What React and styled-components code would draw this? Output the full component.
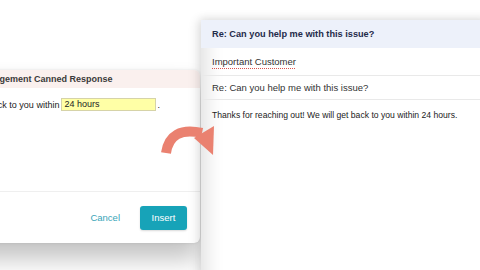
import styled, { createGlobalStyle } from "styled-components";

const GlobalStyle = createGlobalStyle`
  html, body {
    margin: 0;
    padding: 0;
    background: #fff;
  }
  body {
    font-family: "Liberation Sans", Arial, sans-serif;
  }
`;

const Stage = styled.div`
  position: relative;
  width: 480px;
  height: 270px;
  overflow: hidden;
  background: #fff;
  display: flex;
  align-items: flex-start;
`;

const Dialog = styled.div`
  flex: 0 0 300px;
  height: 173px;
  margin: 70px 0 0 -100px;
  background: #fff;
  border-radius: 6px;
  box-shadow: 0 16px 24px rgba(0, 0, 0, 0.24), 0 0 3px rgba(0, 0, 0, 0.1);
  display: flex;
  flex-direction: column;
  overflow: hidden;
`;

const DialogHeader = styled.div`
  height: 18px;
  display: flex;
  align-items: center;
  padding-left: ${(p) => p.indent}px;
  background: #faf0ee;
  font-size: 9px;
  font-weight: 700;
  color: #3a3a3a;
  white-space: nowrap;
`;

const DialogBody = styled.div`
  flex: 1;
  padding: 12px 0 0 ${(p) => p.indent}px;
  font-size: 9px;
  color: #222;
  white-space: nowrap;
  display: flex;
  align-items: flex-start;
`;

const Field = styled.span`
  display: inline-block;
  width: 89px;
  height: 11px;
  margin: -2px 1px 0 2px;
  padding: 0 2px;
  line-height: 11px;
  background: #ffffa6;
  border: 1px solid #d6d3a8;
  color: #222;
`;

const DialogFooter = styled.div`
  height: 52px;
  border-top: 1px solid #efefef;
  display: flex;
  align-items: center;
  justify-content: flex-end;
  gap: 20px;
  padding-right: 13px;
  box-sizing: border-box;
`;

const TextButton = styled.span`
  font-size: 9.5px;
  color: #3aa5b8;
`;

const PrimaryButton = styled.span`
  width: 47px;
  height: 24px;
  display: flex;
  align-items: center;
  justify-content: center;
  background: #17a3b8;
  color: #fff;
  font-size: 9.5px;
  border-radius: 3px;
  box-shadow: 0 1px 2px rgba(0, 0, 0, 0.15);
`;

const Panel = styled.div`
  flex: 0 0 290px;
  height: 260px;
  margin: 20px 0 0 1px;
  background: #fff;
  box-shadow: -3px 0 10px rgba(0, 0, 0, 0.12), 0 -2px 8px rgba(0, 0, 0, 0.05),
    inset 22px 0 18px -16px rgba(0, 0, 0, 0.12);
  display: flex;
  flex-direction: column;
`;

const PanelHeader = styled.div`
  height: 28px;
  display: flex;
  align-items: center;
  padding-left: 11px;
  background: #edf1fa;
  color: #1f2b4a;
  font-size: 9.2px;
  font-weight: 700;
`;

const PanelRow = styled.div`
  height: ${(p) => p.h}px;
  display: flex;
  align-items: center;
  padding-left: 11px;
  border-bottom: 1px solid #e9e9e9;
  color: #333;
  font-size: 9.5px;
`;

const Flagged = styled.span`
  text-decoration: underline dotted #d9534f;
  text-underline-offset: 3px;
`;

const PanelBody = styled.div`
  padding: 10px 0 0 11px;
  font-size: 8.6px;
  color: #222;
`;

const Arrow = styled.svg`
  position: absolute;
  left: 155px;
  top: 118px;
`;

export default function App() {
  return (
    <>
      <GlobalStyle />
      <Stage>
        <Dialog>
          <DialogHeader indent={52}>
            <span>Acknowledgement Canned Response</span>
          </DialogHeader>
          <DialogBody indent={42}>
            We will get back to you within
            <Field>24 hours</Field>.
          </DialogBody>
          <DialogFooter>
            <TextButton>Cancel</TextButton>
            <PrimaryButton>Insert</PrimaryButton>
          </DialogFooter>
        </Dialog>
        <Panel>
          <PanelHeader>Re: Can you help me with this issue?</PanelHeader>
          <PanelRow h={27}>
            <Flagged>Important Customer</Flagged>
          </PanelRow>
          <PanelRow h={23}>Re: Can you help me with this issue?</PanelRow>
          <PanelBody>
            Thanks for reaching out! We will get back to you within 24 hours.
          </PanelBody>
        </Panel>
        <Arrow width="70" height="45" viewBox="0 0 70 45">
          <path d="M11 35 Q15 8 47 15" fill="none" stroke="#ea8170" strokeWidth="10" />
          <polygon points="39,20 59,8 58,37" fill="#ea8170" />
        </Arrow>
      </Stage>
    </>
  );
}
